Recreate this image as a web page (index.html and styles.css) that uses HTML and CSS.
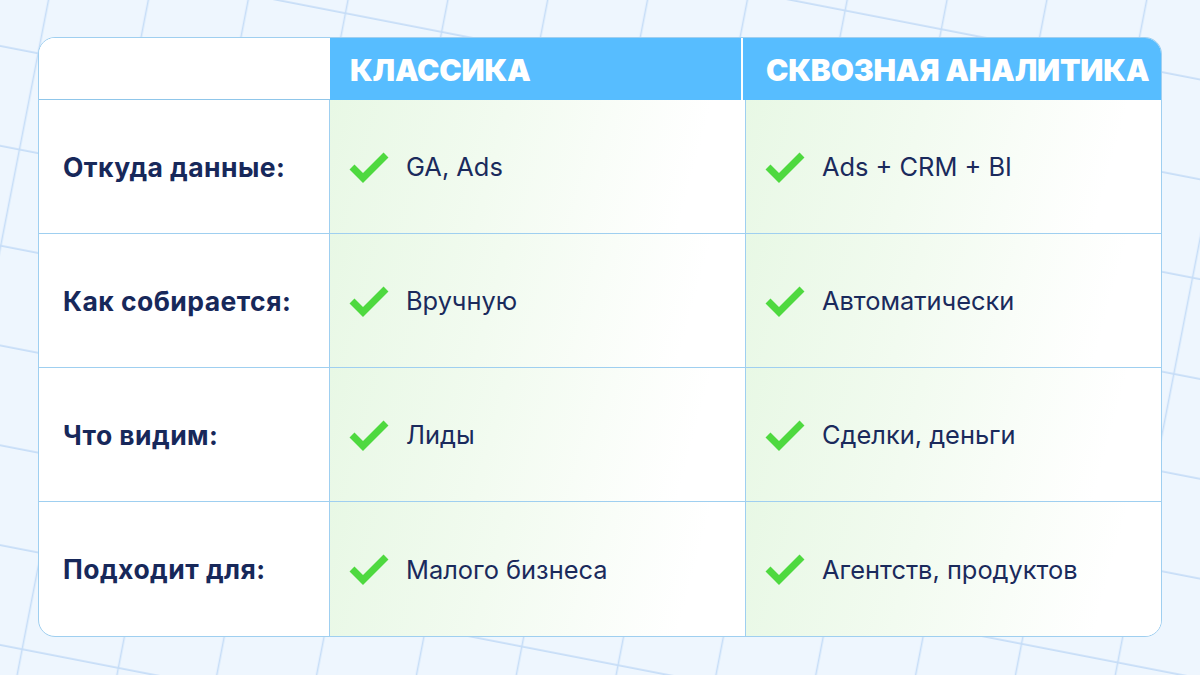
FILE: index.html
```html
<!DOCTYPE html>
<html lang="ru">
<head>
<meta charset="utf-8">
<link rel="stylesheet" href="styles.css">
</head>
<body>
<div class="page">
  <svg class="bg" width="1200" height="675" viewBox="0 0 1200 675" aria-hidden="true">
    <defs>
      <pattern id="grid" width="98" height="98" patternUnits="userSpaceOnUse" patternTransform="rotate(11)">
        <path d="M47.6 0 V98 M0 45.1 H98" fill="none" stroke="#C6DDF7" stroke-width="1.6"/>
      </pattern>
    </defs>
    <rect width="1200" height="675" fill="url(#grid)"/>
  </svg>

  <div class="table">
    <div class="head blank"></div>
    <div class="head">КЛАССИКА</div>
    <div class="head second">СКВОЗНАЯ АНАЛИТИКА</div>

    <div class="label">Откуда данные:</div>
    <div class="cell"><svg class="check" viewBox="0 0 40 32"><polyline points="3,16 14,27 37,4"/></svg><span>GA, Ads</span></div>
    <div class="cell"><svg class="check" viewBox="0 0 40 32"><polyline points="3,16 14,27 37,4"/></svg><span>Ads + CRM + BI</span></div>

    <div class="label">Как собирается:</div>
    <div class="cell"><svg class="check" viewBox="0 0 40 32"><polyline points="3,16 14,27 37,4"/></svg><span>Вручную</span></div>
    <div class="cell"><svg class="check" viewBox="0 0 40 32"><polyline points="3,16 14,27 37,4"/></svg><span>Автоматически</span></div>

    <div class="label">Что видим:</div>
    <div class="cell"><svg class="check" viewBox="0 0 40 32"><polyline points="3,16 14,27 37,4"/></svg><span>Лиды</span></div>
    <div class="cell"><svg class="check" viewBox="0 0 40 32"><polyline points="3,16 14,27 37,4"/></svg><span>Сделки, деньги</span></div>

    <div class="label last">Подходит для:</div>
    <div class="cell last"><svg class="check" viewBox="0 0 40 32"><polyline points="3,16 14,27 37,4"/></svg><span>Малого бизнеса</span></div>
    <div class="cell last"><svg class="check" viewBox="0 0 40 32"><polyline points="3,16 14,27 37,4"/></svg><span>Агентств, продуктов</span></div>
  </div>
</div>
</body>
</html>
```

FILE: styles.css
```css
* { box-sizing: border-box; }
html, body { margin: 0; padding: 0; }
body {
  width: 1200px;
  height: 675px;
  overflow: hidden;
  background: #EEF6FE;
  font-family: Inter, "Noto Sans", sans-serif;
}
.page {
  position: relative;
  width: 1200px;
  height: 675px;
  padding: 37px 38px 38px 38px;
}
.bg {
  position: absolute;
  left: 0;
  top: 0;
}
.table {
  position: relative;
  width: 1124px;
  height: 600px;
  background: #fff;
  border: 1px solid #9FCFF0;
  border-radius: 17px;
  overflow: hidden;
  display: grid;
  grid-template-columns: 291px 416px 415px;
  grid-template-rows: 62px repeat(4, 1fr);
}
.head {
  background: #57BDFF;
  color: #fff;
  font-weight: 900;
  font-size: 30px;
  letter-spacing: -0.2px;
  white-space: nowrap;
  display: flex;
  align-items: center;
  padding-left: 20px;
  padding-top: 1px;
}
.head.blank { background: #fff; border-bottom: 1px solid #8FC6EA; }
.head.second {
  border-left: 2px solid #fff;
  margin-left: -5px;
  padding-left: 23px;
}
.label {
  display: flex;
  align-items: center;
  padding-left: 24px;
  font-weight: 700;
  font-size: 26.5px;
  letter-spacing: 0.45px;
  color: #17285A;
  border-bottom: 1px solid #9FCFF0;
  border-right: 1px solid #9FCFF0;
}
.cell {
  display: flex;
  align-items: center;
  gap: 17px;
  padding-left: 19px;
  font-size: 25.4px;
  color: #1A2A5C;
  border-bottom: 1px solid #9FCFF0;
  border-right: 1px solid #9FCFF0;
  background: linear-gradient(105deg, #E8F8E5 0%, #F2FBF0 40%, #FFFFFF 85%);
}
.cell:nth-child(3n) { border-right: none; }
.last { border-bottom: none; }
.check {
  width: 40px;
  height: 32px;
  flex: none;
}
.check polyline {
  fill: none;
  stroke: #4ED93F;
  stroke-width: 7;
  stroke-linejoin: miter;
}
```
